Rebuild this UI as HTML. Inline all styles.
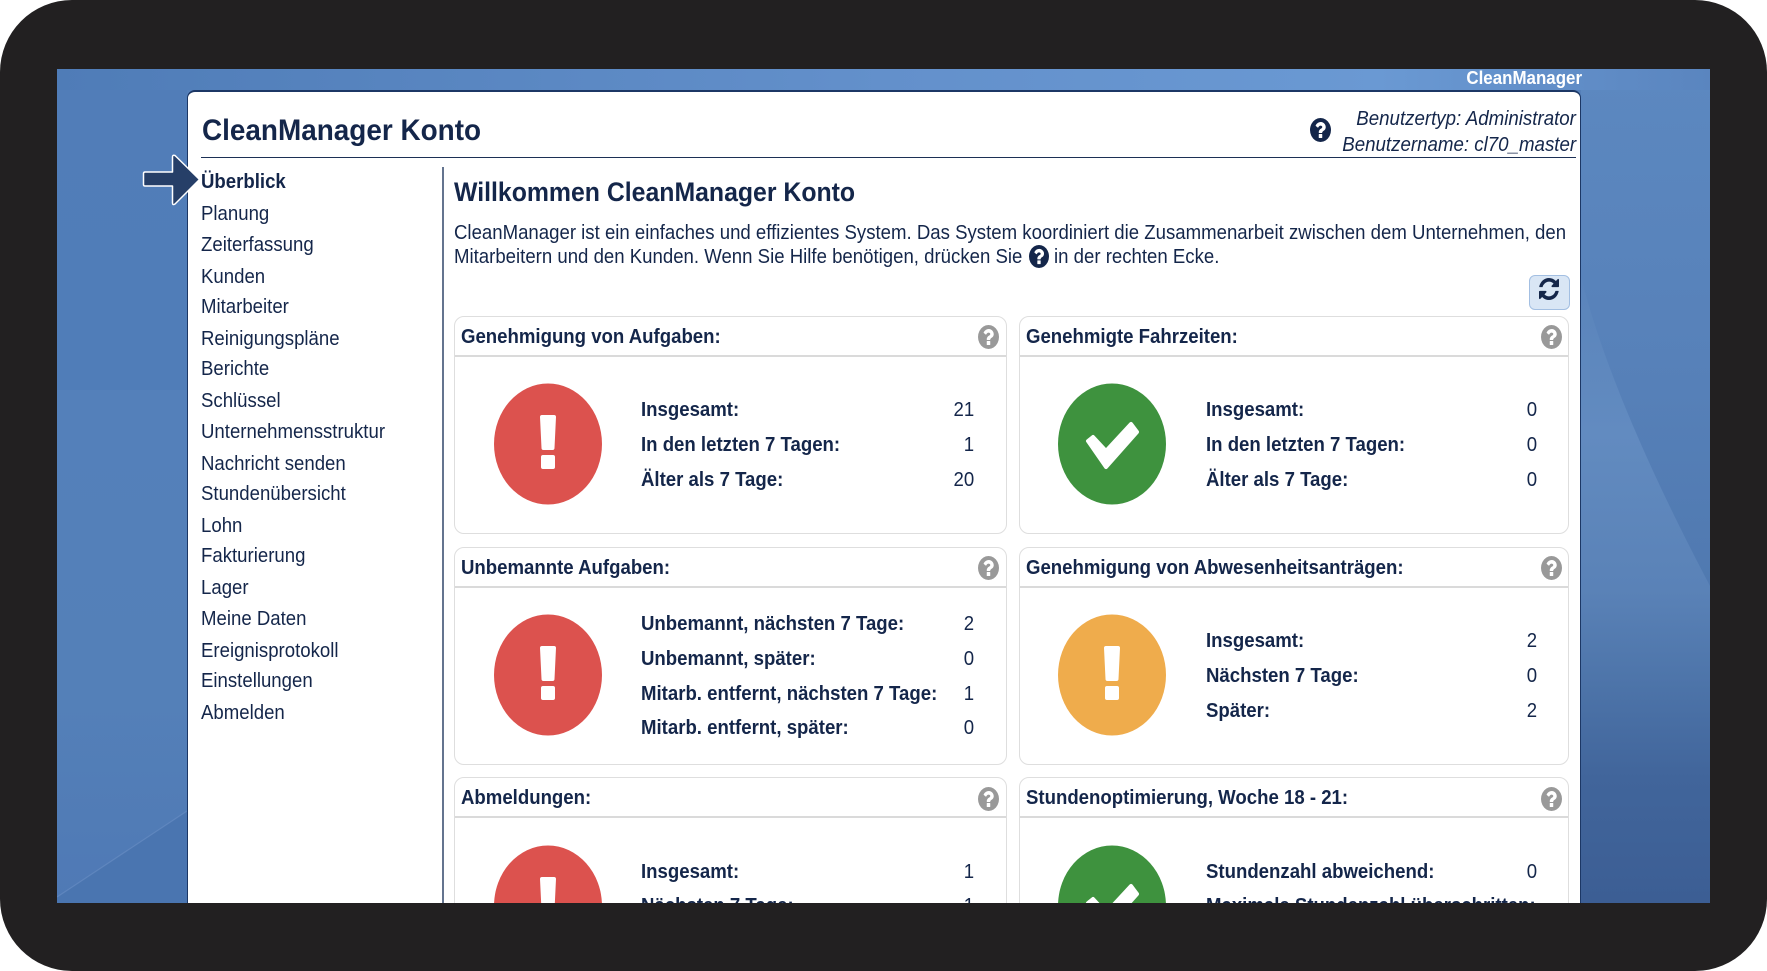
<!DOCTYPE html>
<html lang="de">
<head>
<meta charset="utf-8">
<title>CleanManager Konto</title>
<style>
html,body{margin:0;padding:0;width:1767px;height:971px;overflow:hidden;background:#fff;}
body{position:relative;font-family:"Liberation Sans",Arial,sans-serif;color:#14264a;}
.frame{position:absolute;left:0;top:0;width:1767px;height:971px;background:#222021;border-radius:72px;}
.screen{position:absolute;left:0;top:0;width:1767px;height:971px;clip-path:inset(69px 57px 68px 57px);background:#5580ba;}
.panel{position:absolute;left:187px;top:90px;width:1394px;height:900px;background:#fff;border:1px solid #1c3765;border-top-width:2px;border-radius:8px 8px 0 0;box-sizing:border-box;}
.t{position:absolute;white-space:nowrap;font-size:20px;line-height:24px;height:24px;transform:scaleX(.93);transform-origin:left center;}
.r{transform-origin:right center;text-align:right;}
.b{font-weight:bold;}
.hr{position:absolute;left:201px;top:157px;width:1375px;height:1px;background:#1c3055;}
.vr{position:absolute;left:442px;top:167px;width:2px;height:740px;background:#64748f;}
.card{position:absolute;box-sizing:border-box;border:1.5px solid #dedede;border-radius:10px;background:#fff;}
.card i{position:absolute;left:0;right:0;height:1.5px;background:#dadada;display:block;}
svg{position:absolute;overflow:visible;}
</style>
</head>
<body>
<svg width="0" height="0" style="position:absolute">
<defs>
<symbol id="q" viewBox="128 128 1536 1536" preserveAspectRatio="none"><path d="M1024 1376v-192q0-14-9-23t-23-9h-192q-14 0-23 9t-9 23v192q0 14 9 23t23 9h192q14 0 23-9t9-23zm256-672q0-88-55.5-163t-138.5-116-170-41q-243 0-371 213-15 24 8 42l132 100q7 6 19 6 16 0 25-12 53-68 86-92 34-24 86-24 48 0 85.5 26t37.5 59q0 38-20 61t-68 45q-63 28-115.5 86.5t-52.5 125.5v36q0 14 9 23t23 9h192q14 0 23-9t9-23q0-19 21.5-49.5t54.5-49.5q32-18 49-28.5t46-35 44.5-48 28-60.5 12.5-81zm384 192q0 209-103 385.5t-279.5 279.5-385.5 103-385.5-103-279.5-279.5-103-385.5 103-385.5 279.5-279.5 385.5-103 385.5 103 279.5 279.5 103 385.5z"/></symbol>
<symbol id="ex" viewBox="-54 -61 108 122" preserveAspectRatio="none"><ellipse cx="0" cy="0" rx="54" ry="60.5"/><path d="M-6 -29h12q2 0 2 2l-1.500 31q0 2-2 2h-9q-2 0-2-2l-1.500-31q0-2 2-2zM-5 11h10q2 0 2 2v10q0 2-2 2h-10q-2 0-2-2v-10q0-2 2-2z" fill="#fff"/></symbol>
<symbol id="ok" viewBox="-54 -61 108 122" preserveAspectRatio="none"><ellipse cx="0" cy="0" rx="54" ry="60.5"/><polygon points="-24,-3 -19,-7 -6,7 19,-20 25,-12 -6,23" fill="#fff" stroke="#fff" stroke-width="4" stroke-linejoin="round"/></symbol>
<linearGradient id="gTop" x1="0" x2="1" y1="0" y2="0"><stop offset="0" stop-color="#4f7cb7"/><stop offset=".5" stop-color="#6390cb"/><stop offset=".8" stop-color="#6a99d3"/><stop offset="1" stop-color="#5a85bf"/></linearGradient>
<linearGradient id="gL1" x1="0" x2="0" y1="0" y2="1"><stop offset="0" stop-color="#517db8"/><stop offset="1" stop-color="#507db8"/></linearGradient>
<linearGradient id="gL2" x1="0" x2="0" y1="0" y2="1"><stop offset="0" stop-color="#5480ba"/><stop offset=".6" stop-color="#5480b8"/><stop offset="1" stop-color="#4f79b5"/></linearGradient>
<linearGradient id="gR" gradientUnits="userSpaceOnUse" x1="0" x2="0" y1="69" y2="903"><stop offset="0" stop-color="#5c88c0"/><stop offset=".35" stop-color="#5781b9"/><stop offset=".62" stop-color="#5079b0"/><stop offset=".72" stop-color="#4a70a6"/><stop offset=".88" stop-color="#40649a"/><stop offset="1" stop-color="#3c5e94"/></linearGradient>
<linearGradient id="gW" gradientUnits="userSpaceOnUse" x1="0" x2="0" y1="277" y2="903"><stop offset="0" stop-color="#5a84bb"/><stop offset=".25" stop-color="#628bc0"/><stop offset=".5" stop-color="#5a82b7"/><stop offset=".65" stop-color="#4d74a9"/><stop offset=".8" stop-color="#41659b"/><stop offset="1" stop-color="#3c5e94"/></linearGradient>
</defs>
</svg>

<div class="frame"></div>
<div class="screen">
  <svg style="left:0;top:0" width="1767" height="971">
    <rect x="57" y="69" width="1653" height="21" fill="url(#gTop)"/>
    <rect x="57" y="90" width="130" height="300" fill="url(#gL1)"/>
    <rect x="57" y="390" width="130" height="513" fill="url(#gL2)"/>
    <path d="M57 897 L187 811 V903 H57 Z" fill="#4a75b0"/>
    <path d="M57 897 L187 811" stroke="#6a90c4" stroke-opacity=".6" stroke-width="1.200" fill="none"/>
    <rect x="1581" y="90" width="129" height="813" fill="url(#gR)"/>
    <path d="M1581 277 Q1612 400 1710 586 V903 H1581 Z" fill="url(#gW)"/>
  </svg>
  <div class="t b r" style="right:185px;top:66px;font-size:18px;color:#fff;transform:scaleX(.94);">CleanManager</div>

  <div class="panel"></div>
  <div class="t b" style="left:201.500px;top:113px;height:36px;line-height:36px;font-size:30px;color:#14264a;">CleanManager Konto</div>
  <svg style="left:1309.500px;top:118px" width="21" height="24" fill="#14264a"><use href="#q" width="21" height="24"/></svg>
  <div class="t r" style="right:191px;top:107px;font-style:italic;transform:scaleX(.935);">Benutzertyp: Administrator</div>
  <div class="t r" style="right:191px;top:133px;font-style:italic;transform:scaleX(.935);">Benutzername: cl70_master</div>
  <div class="hr"></div>
  <div class="vr"></div>

  <div class="t b" style="left:201px;top:170px;">Überblick</div>
  <div class="t" style="left:201px;top:202px;">Planung</div>
  <div class="t" style="left:201px;top:233px;">Zeiterfassung</div>
  <div class="t" style="left:201px;top:265px;">Kunden</div>
  <div class="t" style="left:201px;top:295px;">Mitarbeiter</div>
  <div class="t" style="left:201px;top:327px;">Reinigungspläne</div>
  <div class="t" style="left:201px;top:357px;">Berichte</div>
  <div class="t" style="left:201px;top:389px;">Schlüssel</div>
  <div class="t" style="left:201px;top:420px;">Unternehmensstruktur</div>
  <div class="t" style="left:201px;top:452px;">Nachricht senden</div>
  <div class="t" style="left:201px;top:482px;">Stundenübersicht</div>
  <div class="t" style="left:201px;top:514px;">Lohn</div>
  <div class="t" style="left:201px;top:544px;">Fakturierung</div>
  <div class="t" style="left:201px;top:576px;">Lager</div>
  <div class="t" style="left:201px;top:607px;">Meine Daten</div>
  <div class="t" style="left:201px;top:639px;">Ereignisprotokoll</div>
  <div class="t" style="left:201px;top:669px;">Einstellungen</div>
  <div class="t" style="left:201px;top:701px;">Abmelden</div>

  <svg style="left:0;top:0" width="300" height="300">
    <path d="M145 172 H172.500 V157 Q172.500 154.500 175 155.500 L199.500 179.500 L175 204 Q172.500 205.500 172.500 203 V186 H145 Q143.500 186 143.500 184.500 V173.500 Q143.500 172 145 172 Z" fill="#263f68" stroke="#fff" stroke-width="1.500" stroke-linejoin="round"/>
  </svg>

  <div class="t b" style="left:454px;top:176px;height:32px;line-height:32px;font-size:26.700px;">Willkommen CleanManager Konto</div>
  <div class="t" style="left:454px;top:221px;">CleanManager ist ein einfaches und effizientes System. Das System koordiniert die Zusammenarbeit zwischen dem Unternehmen, den</div>
  <div class="t" style="left:454px;top:245px;">Mitarbeitern und den Kunden. Wenn Sie Hilfe benötigen, drücken Sie</div>
  <svg style="left:1029px;top:245px" width="20" height="23" fill="#14264a"><use href="#q" width="20" height="23"/></svg>
  <div class="t" style="left:1054px;top:245px;">in der rechten Ecke.</div>

  <div style="position:absolute;left:1529px;top:275px;width:41px;height:35px;box-sizing:border-box;background:#d9e6f5;border:1px solid #a3bfe2;border-radius:6px;"></div>
  <svg style="left:1539px;top:278px" width="20" height="22" viewBox="128 128 1536 1536" preserveAspectRatio="none" fill="#14264a"><path d="M1639 1056q0 5-1 7-64 268-268 434.500t-478 166.500q-146 0-282.500-55t-243.500-157l-129 129q-19 19-45 19t-45-19-19-45v-448q0-26 19-45t45-19h448q26 0 45 19t19 45-19 45l-137 137q71 66 161 102t187 36q134 0 250-65t186-179q11-17 53-117 8-23 30-23h192q13 0 22.500 9.500t9.500 22.500zm25-800v448q0 26-19 45t-45 19h-448q-26 0-45-19t-19-45 19-45l138-138q-148-137-349-137-134 0-250 65t-186 179q-11 17-53 117-8 23-30 23h-199q-13 0-22.500-9.500t-9.500-22.500v-7q65-268 270-434.500t480-166.500q146 0 284 55.500t245 156.500l130-129q19-19 45-19t45 19 19 45z"/></svg>

  <!-- Card 1 -->
  <div class="card" style="left:454px;top:316px;width:553px;height:218px;"><i style="top:38px"></i></div>
  <div class="t b" style="left:461px;top:325px;">Genehmigung von Aufgaben:</div>
  <svg style="left:977.500px;top:325px" width="21" height="24" fill="#999"><use href="#q" width="21" height="24"/></svg>
  <svg style="left:494px;top:383px" width="108" height="122" fill="#dc524e"><use href="#ex" width="108" height="122"/></svg>
  <div class="t b" style="left:641px;top:398px;">Insgesamt:</div>
  <div class="t b" style="left:641px;top:433px;">In den letzten 7 Tagen:</div>
  <div class="t b" style="left:641px;top:468px;">Älter als 7 Tage:</div>
  <div class="t r" style="right:793px;top:398px;">21</div>
  <div class="t r" style="right:793px;top:433px;">1</div>
  <div class="t r" style="right:793px;top:468px;">20</div>

  <!-- Card 2 -->
  <div class="card" style="left:1018.500px;top:316px;width:550.500px;height:218px;"><i style="top:38px"></i></div>
  <div class="t b" style="left:1026px;top:325px;">Genehmigte Fahrzeiten:</div>
  <svg style="left:1541px;top:325px" width="21" height="24" fill="#999"><use href="#q" width="21" height="24"/></svg>
  <svg style="left:1058px;top:383px" width="108" height="122" fill="#3e923e"><use href="#ok" width="108" height="122"/></svg>
  <div class="t b" style="left:1206px;top:398px;">Insgesamt:</div>
  <div class="t b" style="left:1206px;top:433px;">In den letzten 7 Tagen:</div>
  <div class="t b" style="left:1206px;top:468px;">Älter als 7 Tage:</div>
  <div class="t r" style="right:230px;top:398px;">0</div>
  <div class="t r" style="right:230px;top:433px;">0</div>
  <div class="t r" style="right:230px;top:468px;">0</div>

  <!-- Card 3 -->
  <div class="card" style="left:454px;top:547px;width:553px;height:218px;"><i style="top:38px"></i></div>
  <div class="t b" style="left:461px;top:556px;">Unbemannte Aufgaben:</div>
  <svg style="left:977.500px;top:556px" width="21" height="24" fill="#999"><use href="#q" width="21" height="24"/></svg>
  <svg style="left:494px;top:614px" width="108" height="122" fill="#dc524e"><use href="#ex" width="108" height="122"/></svg>
  <div class="t b" style="left:641px;top:612px;">Unbemannt, nächsten 7 Tage:</div>
  <div class="t b" style="left:641px;top:647px;">Unbemannt, später:</div>
  <div class="t b" style="left:641px;top:682px;">Mitarb. entfernt, nächsten 7 Tage:</div>
  <div class="t b" style="left:641px;top:716px;">Mitarb. entfernt, später:</div>
  <div class="t r" style="right:793px;top:612px;">2</div>
  <div class="t r" style="right:793px;top:647px;">0</div>
  <div class="t r" style="right:793px;top:682px;">1</div>
  <div class="t r" style="right:793px;top:716px;">0</div>

  <!-- Card 4 -->
  <div class="card" style="left:1018.500px;top:547px;width:550.500px;height:218px;"><i style="top:38px"></i></div>
  <div class="t b" style="left:1026px;top:556px;">Genehmigung von Abwesenheitsanträgen:</div>
  <svg style="left:1541px;top:556px" width="21" height="24" fill="#999"><use href="#q" width="21" height="24"/></svg>
  <svg style="left:1058px;top:614px" width="108" height="122" fill="#efac4c"><use href="#ex" width="108" height="122"/></svg>
  <div class="t b" style="left:1206px;top:629px;">Insgesamt:</div>
  <div class="t b" style="left:1206px;top:664px;">Nächsten 7 Tage:</div>
  <div class="t b" style="left:1206px;top:699px;">Später:</div>
  <div class="t r" style="right:230px;top:629px;">2</div>
  <div class="t r" style="right:230px;top:664px;">0</div>
  <div class="t r" style="right:230px;top:699px;">2</div>

  <!-- Card 5 -->
  <div class="card" style="left:454px;top:777px;width:553px;height:218px;"><i style="top:38px"></i></div>
  <div class="t b" style="left:461px;top:786px;">Abmeldungen:</div>
  <svg style="left:977.500px;top:787px" width="21" height="24" fill="#999"><use href="#q" width="21" height="24"/></svg>
  <svg style="left:494px;top:845px" width="108" height="122" fill="#dc524e"><use href="#ex" width="108" height="122"/></svg>
  <div class="t b" style="left:641px;top:860px;">Insgesamt:</div>
  <div class="t b" style="left:641px;top:894px;">Nächsten 7 Tage:</div>
  <div class="t r" style="right:793px;top:860px;">1</div>
  <div class="t r" style="right:793px;top:894px;">1</div>

  <!-- Card 6 -->
  <div class="card" style="left:1018.500px;top:777px;width:550.500px;height:218px;"><i style="top:38px"></i></div>
  <div class="t b" style="left:1026px;top:786px;">Stundenoptimierung, Woche 18 - 21:</div>
  <svg style="left:1541px;top:787px" width="21" height="24" fill="#999"><use href="#q" width="21" height="24"/></svg>
  <svg style="left:1058px;top:845px" width="108" height="122" fill="#3e923e"><use href="#ok" width="108" height="122"/></svg>
  <div class="t b" style="left:1206px;top:860px;">Stundenzahl abweichend:</div>
  <div class="t b" style="left:1206px;top:894px;">Maximale Stundenzahl überschritten:</div>
  <div class="t r" style="right:230px;top:860px;">0</div>
</div>
</body>
</html>
